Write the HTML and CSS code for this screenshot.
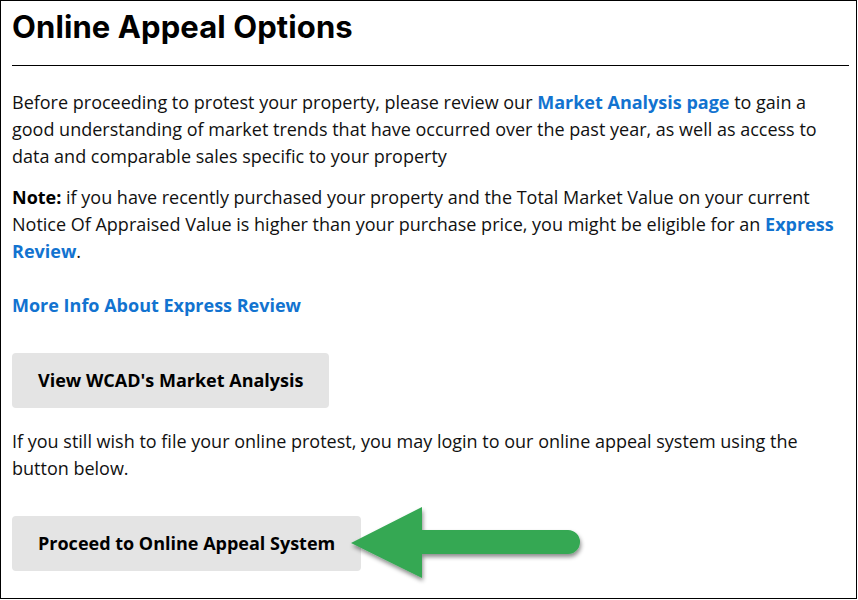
FILE: index.html
```html
<!DOCTYPE html>
<html>
<head>
<meta charset="utf-8">
<link rel="stylesheet" href="styles.css">
</head>
<body>
<div class="frame">
  <h1 class="title">Online Appeal Options</h1>
  <hr class="rule">
  <p class="text">Before proceeding to protest your property, please review our <a class="link" href="#">Market Analysis page</a> to gain a good understanding of market trends that have occurred over the past year, as well as access to data and comparable sales specific to your property</p>
  <p class="text"><strong>Note:</strong> if you have recently purchased your property and the Total Market Value on your current Notice Of Appraised Value is higher than your purchase price, you might be eligible for an <a class="link" href="#">Express Review</a>.</p>
  <p class="text more"><a class="link" href="#">More Info About Express Review</a></p>
  <div class="btn-row"><a class="btn" href="#">View WCAD's Market Analysis</a></div>
  <p class="text">If you still wish to file your online protest, you may login to our online appeal system using the button below.</p>
  <div class="btn-row last">
    <a class="btn" href="#">Proceed to Online Appeal System</a>
    <svg class="arrow" width="240" height="84" viewBox="0 0 240 84" aria-hidden="true">
      <defs>
        <filter id="sh" x="-10%" y="-20%" width="130%" height="150%">
          <feDropShadow dx="1" dy="3" stdDeviation="2.2" flood-color="#000" flood-opacity="0.45"/>
        </filter>
      </defs>
      <path filter="url(#sh)" fill="#34a853" d="M2 36 L73 0 L73 23 L219 23 A12 12 0 0 1 219 47 L73 47 L73 71 Z"/>
    </svg>
  </div>
</div>
</body>
</html>
```
FILE: styles.css
```css
html, body {
  margin: 0;
  padding: 0;
  background: #fff;
}
.frame {
  box-sizing: border-box;
  width: 857px;
  height: 599px;
  border: 1px solid #000;
  padding: 0 7px 0 11px;
  font-family: "Open Sans", "Liberation Sans", sans-serif;
  font-size: 18px;
  line-height: 27px;
  color: #111;
  overflow: hidden;
}
.title {
  font-family: "Inter", "Lato", sans-serif;
  font-weight: 700;
  font-size: 31px;
  line-height: 38px;
  margin: 7px 0 0;
  color: #000;
  letter-spacing: 0.1px;
}
.rule {
  border: 0;
  border-top: 1px solid #000;
  margin: 19px 0 23px;
  height: 0;
}
.text {
  margin: 0 0 14px;
}
.text strong {
  font-weight: 700;
  color: #000;
}
.more {
  margin-top: 27px;
  margin-bottom: 34px;
}
.link {
  color: #1273d0;
  font-weight: 700;
  text-decoration: none;
}
.btn-row {
  display: flex;
  align-items: flex-start;
  margin-bottom: 20px;
}
.btn-row.last {
  margin-top: 34px;
}
.btn {
  display: inline-block;
  background: #e4e4e4;
  color: #000;
  font-weight: 700;
  text-decoration: none;
  border-radius: 4px;
  padding: 14px 26px;
}
.arrow {
  display: block;
  margin-left: -12px;
  margin-top: -9px;
}
```
